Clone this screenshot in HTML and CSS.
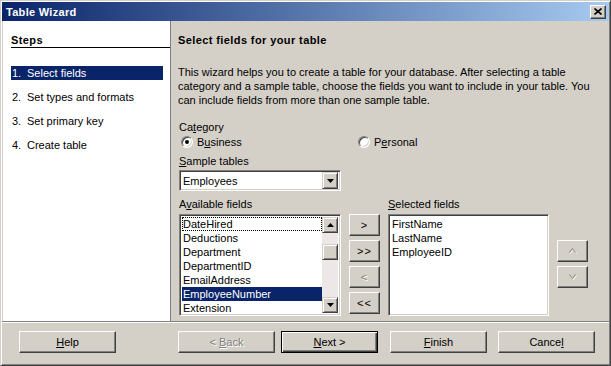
FILE: index.html
```html
<!DOCTYPE html>
<html lang="en">
<head>
  <meta charset="UTF-8" />
  <title>Table Wizard</title>
  <link rel="stylesheet" href="styles.css">
</head>
<body>
  <div class="window">
    <div class="titlebar">
      <span class="title">Table Wizard</span>
      <span class="close-btn">
        <svg width="8" height="7" viewBox="0 0 8 7"><path d="M0.5 0.5 L7.5 6.5 M7.5 0.5 L0.5 6.5" stroke="#000" stroke-width="1.6"/></svg>
      </span>
    </div>

    <div class="main">
      <div class="steps">
        <div class="steps-head">Steps</div>
        <ul class="step-list">
          <li class="step active"><span class="num">1.</span>Select fields</li>
          <li class="step"><span class="num">2.</span>Set types and formats</li>
          <li class="step"><span class="num">3.</span>Set primary key</li>
          <li class="step"><span class="num">4.</span>Create table</li>
        </ul>
      </div>

      <div class="page">
        <div class="page-title">Select fields for your table</div>
        <p class="intro">This wizard helps you to create a table for your database. After selecting a table<br>category and a sample table, choose the fields you want to include in your table. You<br>can include fields from more than one sample table.</p>

        <div class="label">Ca<u>t</u>egory</div>
        <div class="radios">
          <label class="radio first"><span class="radio-box checked"></span><span>B<u>u</u>siness</span></label>
          <label class="radio"><span class="radio-box"></span><span>P<u>e</u>rsonal</span></label>
        </div>

        <div class="label gap"><u>S</u>ample tables</div>
        <div class="combo">
          <span class="combo-text">Employees</span>
          <span class="combo-btn">
            <svg width="7" height="4" viewBox="0 0 7 4"><polygon points="0,0 7,0 3.5,4" fill="#000"/></svg>
          </span>
        </div>

        <div class="fields">
          <div class="field-label">A<u>v</u>ailable fields</div>
          <div></div>
          <div class="field-label"><u>S</u>elected fields</div>
          <div></div>

          <div class="listbox">
            <ul class="items">
              <li class="focus">DateHired</li>
              <li>Deductions</li>
              <li>Department</li>
              <li>DepartmentID</li>
              <li>EmailAddress</li>
              <li class="selected">EmployeeNumber</li>
              <li>Extension</li>
            </ul>
            <div class="scrollbar">
              <span class="sb-btn">
                <svg width="7" height="4" viewBox="0 0 7 4"><polygon points="0,4 7,4 3.5,0" fill="#000"/></svg>
              </span>
              <div class="sb-track"><span class="sb-thumb"></span></div>
              <span class="sb-btn">
                <svg width="7" height="4" viewBox="0 0 7 4"><polygon points="0,0 7,0 3.5,4" fill="#000"/></svg>
              </span>
            </div>
          </div>

          <div class="move-btns">
            <button class="btn small">&gt;</button>
            <button class="btn small">&gt;&gt;</button>
            <button class="btn small disabled">&lt;</button>
            <button class="btn small">&lt;&lt;</button>
          </div>

          <div class="listbox">
            <ul class="items">
              <li>FirstName</li>
              <li>LastName</li>
              <li>EmployeeID</li>
            </ul>
          </div>

          <div class="order-btns">
            <button class="btn small disabled">
              <svg width="8" height="6" viewBox="0 0 8 6"><polyline points="1.5,5.5 4.5,1.5 7.5,5.5" fill="none" stroke="#fff"/><polyline points="0.5,4.5 3.5,0.5 6.5,4.5" fill="none" stroke="#808080"/></svg>
            </button>
            <button class="btn small disabled">
              <svg width="8" height="6" viewBox="0 0 8 6"><polyline points="1.5,1.5 4.5,5.5 7.5,1.5" fill="none" stroke="#fff"/><polyline points="0.5,0.5 3.5,4.5 6.5,0.5" fill="none" stroke="#808080"/></svg>
            </button>
          </div>
        </div>
      </div>
    </div>

    <div class="footer">
      <button class="btn wide help"><u>H</u>elp</button>
      <button class="btn wide back disabled">&lt; <u>B</u>ack</button>
      <button class="btn wide next default"><u>N</u>ext &gt;</button>
      <button class="btn wide finish"><u>F</u>inish</button>
      <button class="btn wide cancel">Cance<u>l</u></button>
    </div>
  </div>
</body>
</html>
```

FILE: styles.css
```css
:root {
  --face: #d4d0c8;
  --shadow: #808080;
  --dark: #404040;
  --navy: #0a246a;
}

* {
  box-sizing: border-box;
  margin: 0;
  padding: 0;
}

body {
  font-family: "Liberation Sans", Arial, sans-serif;
  font-size: 11px;
  color: #000;
  background: var(--face);
}

u {
  text-decoration: underline;
  text-underline-offset: 1px;
}

.window {
  width: 611px;
  height: 366px;
  display: flex;
  flex-direction: column;
  background: var(--face);
  border: 1px solid;
  border-color: var(--face) var(--dark) var(--dark) var(--face);
  box-shadow: inset 1px 1px #fff, inset -1px -1px var(--shadow);
  padding: 1px;
}

/* title bar */
.titlebar {
  height: 19px;
  display: flex;
  align-items: center;
  justify-content: space-between;
  background: linear-gradient(90deg, #0a246a, #a6caf0);
  padding: 0 3px 0 4px;
}

.title {
  color: #fff;
  font-weight: 700;
  letter-spacing: 0.3px;
}

.close-btn {
  width: 16px;
  height: 14px;
  display: flex;
  align-items: center;
  justify-content: center;
  background: var(--face);
  border: 1px solid;
  border-color: #fff var(--dark) var(--dark) #fff;
  box-shadow: inset -1px -1px var(--shadow);
}

/* body */
.main {
  height: 300px;
  display: flex;
}

.steps {
  width: 168px;
  margin-left: 1px;
  background: #fff;
  border-right: 1px solid var(--shadow);
}

.steps-head {
  margin: 13px 0 0 8px;
  line-height: 13px;
  font-weight: 700;
  letter-spacing: 0.4px;
  border-bottom: 1px solid #000;
}

.step-list {
  list-style: none;
  margin: 18px 7px 0 8px;
}

.step {
  height: 14px;
  line-height: 14px;
  padding-left: 1px;
  margin-bottom: 10px;
}

.step.active {
  background: var(--navy);
  color: #fff;
}

.num {
  display: inline-block;
  width: 15px;
}

.page {
  flex: 1;
  padding: 13px 8px 0 7px;
}

.page-title {
  line-height: 13px;
  font-weight: 700;
  letter-spacing: 0.4px;
}

.intro {
  margin-top: 18px;
  line-height: 14px;
}

.label {
  line-height: 14px;
  margin-top: 13px;
  padding-left: 1px;
}

.label.gap {
  margin-top: 5px;
}

.field-label {
  line-height: 14px;
}

.radios {
  display: flex;
  margin-top: 1px;
  height: 14px;
  align-items: center;
}

.radio {
  display: flex;
  align-items: center;
  gap: 4px;
}

.radio.first {
  width: 177px;
  margin-left: 3px;
}

.radio-box {
  width: 12px;
  height: 12px;
  border-radius: 50%;
  background: #fff;
  border: 1px solid;
  border-color: var(--shadow) #fff #fff var(--shadow);
  box-shadow: inset 1px 1px var(--dark), inset -1px -1px var(--face);
  display: flex;
  align-items: center;
  justify-content: center;
}

.radio-box.checked::after {
  content: "";
  width: 4px;
  height: 4px;
  border-radius: 50%;
  background: #000;
}

.combo {
  width: 162px;
  height: 21px;
  margin: 2px 0 0 1px;
  display: flex;
  align-items: center;
  background: #fff;
  border: 1px solid;
  border-color: var(--shadow) #fff #fff var(--shadow);
  box-shadow: inset 1px 1px var(--dark), inset -1px -1px var(--face);
  padding: 2px;
}

.combo-text {
  flex: 1;
  padding-left: 1px;
}

.combo-btn,
.sb-btn,
.sb-thumb {
  width: 16px;
  height: 17px;
  display: flex;
  align-items: center;
  justify-content: center;
  background: var(--face);
  border: 1px solid;
  border-color: var(--face) var(--dark) var(--dark) var(--face);
  box-shadow: inset 1px 1px #fff, inset -1px -1px var(--shadow);
}

/* field pickers */
.fields {
  display: grid;
  grid-template-columns: 162px 31px 161px 31px;
  column-gap: 8px;
  row-gap: 3px;
  margin: 6px 0 0 1px;
}

.listbox {
  height: 102px;
  display: flex;
  background: #fff;
  border: 1px solid;
  border-color: var(--shadow) #fff #fff var(--shadow);
  box-shadow: inset 1px 1px var(--dark), inset -1px -1px var(--face);
  padding: 2px;
}

.items {
  flex: 1;
  list-style: none;
}

.items li {
  height: 14px;
  line-height: 14px;
  padding-left: 1px;
  white-space: nowrap;
}

.items li.focus {
  outline: 1px dotted #000;
  outline-offset: -1px;
}

.items li.selected {
  background: var(--navy);
  color: #fff;
}

.scrollbar {
  width: 16px;
  display: flex;
  flex-direction: column;
  background: #ede7e7;
}

.sb-btn {
  height: 16px;
}

.sb-track {
  flex: 1;
  padding-top: 11px;
}

.sb-thumb {
  height: 16px;
}

.move-btns,
.order-btns {
  display: flex;
  flex-direction: column;
  gap: 4px;
}

.order-btns {
  margin-top: 26px;
}

.btn {
  font: inherit;
  color: #000;
  background: var(--face);
  border: 1px solid;
  border-color: #fff var(--dark) var(--dark) #fff;
  box-shadow: inset -1px -1px var(--shadow);
  text-align: center;
}

.btn.small {
  width: 31px;
  height: 22px;
  letter-spacing: 1px;
}

.btn svg {
  display: block;
  margin: 0 auto;
}

.btn.disabled {
  color: var(--shadow);
  text-shadow: 1px 1px #fff;
}

/* footer */
.footer {
  flex: 1;
  display: flex;
  align-items: flex-start;
  border-top: 1px solid var(--shadow);
  box-shadow: inset 0 1px #fff;
  padding: 9px 0 0 17px;
}

.btn.wide {
  width: 97px;
  height: 22px;
}

.btn.default {
  border: 1px solid #000;
  box-shadow: inset 1px 1px #fff, inset -1px -1px var(--dark), inset -2px -2px var(--shadow);
}

.back { margin-left: 62px; }
.next { margin-left: 6px; }
.finish { margin-left: 12px; }
.cancel { margin-left: 11px; }
```
